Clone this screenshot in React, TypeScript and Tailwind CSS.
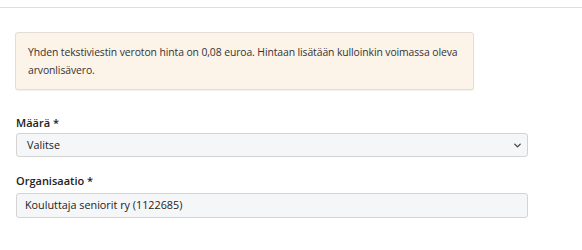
import { ChevronDown } from 'lucide-react';

export default function App() {
  return (
    <div className="w-[582px] h-[250px] bg-white font-['Open_Sans',sans-serif] text-[#333] overflow-hidden">
      {/* Top divider */}
      <div className="pt-[7px]">
        <div className="h-px bg-[#dedede]" />
      </div>

      <div className="pl-[15px] pr-[54px] pt-[24px]">
        {/* Notice */}
        <div className="w-[459px] bg-[#fcf4e9] border border-[#e2ddd6] rounded-[3px] px-[12px] py-[10px] text-[10.4px] tracking-[-0.1px] leading-[18px] shadow-[0_1px_1px_rgba(0,0,0,0.06)]">
          Yhden tekstiviestin veroton hinta on 0,08 euroa. Hintaan lisätään kulloinkin voimassa oleva arvonlisävero.
        </div>

        {/* Määrä */}
        <div className="mt-[25px] pl-px">
          <label className="block text-[11px] font-semibold leading-[16px] text-[#222]">Määrä *</label>
          <div className="mt-[2px] relative h-[24px] border border-[#d3d3d3] rounded-[3px] bg-[#f5f6f8] flex items-center pl-[10px] text-[10.8px] text-[#222]">
            Valitse
            <ChevronDown className="absolute right-[4px] top-[6px] w-[11px] h-[11px] text-[#444]" strokeWidth={3} />
          </div>
        </div>

        {/* Organisaatio */}
        <div className="mt-[16px] pl-px">
          <label className="block text-[11px] font-semibold leading-[16px] text-[#222]">Organisaatio *</label>
          <div className="mt-[4px] h-[25px] border border-[#d3d3d3] rounded-[3px] bg-[#f5f6f8] flex items-center pl-[8px] text-[10.8px] text-[#222]">
            Kouluttaja seniorit ry (1122685)
          </div>
        </div>
      </div>
    </div>
  );
}
